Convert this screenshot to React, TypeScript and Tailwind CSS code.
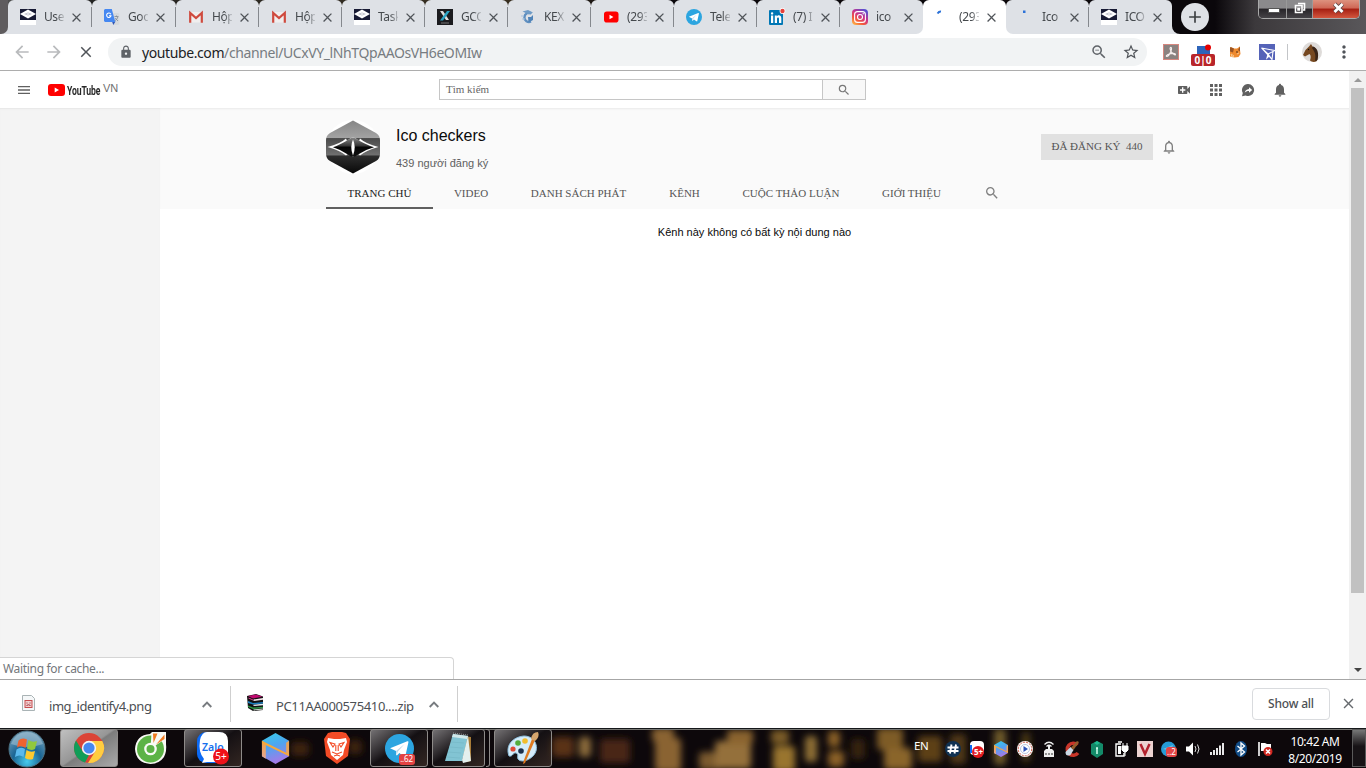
import React from "react";
import {
  MdMenu, MdVideoCall, MdApps, MdNotifications, MdNotificationsNone, MdSearch, MdLock,
  MdStarBorder, MdArrowBack, MdArrowForward, MdClose, MdAdd, MdMoreVert, MdZoomOut,
} from "react-icons/md";

const ui = "font-['Noto_Sans','Open_Sans',sans-serif]";
const serif = "font-['Liberation_Serif',serif]";
const sans = "font-['Liberation_Sans',sans-serif]";

function IcoIcon() {
  return (
    <svg width="16" height="16" viewBox="0 0 16 16">
      <rect width="16" height="16" fill="#fff" />
      <rect width="16" height="11" fill="#171a34" />
      <path d="M0 5 8 0.5 16 5 8 9.5Z" fill="#fff" />
      <path d="M4 5 8 3.4 12 5 8 6.6Z" fill="#b8bac6" />
      <path d="M6.2 5 8 4.2 9.8 5 8 5.8Z" fill="#fff" />
    </svg>
  );
}
function TranslateIcon() {
  return (
    <svg width="16" height="16" viewBox="0 0 16 16">
      <path d="M6 4h8.3l1 1v10l-1 1H9.5Z" fill="#d6d9dc" />
      <path d="M8 12.500h3.500l-2.200 3.500Z" fill="#3157b5" />
      <path d="M1 0h6.800l3.500 13H1L0 12V1Z" fill="#4688f1" />
      <path d="M6.800 5.200A2.200 2.200 0 1 0 7 6.700H5" fill="none" stroke="#fff" strokeWidth="1.100" />
      <path d="M10.500 7.500h4M12.500 6.500v1M13.800 8c-.5 2-1.700 3-3 3.600M11.200 9l2.800 3" stroke="#7c8790" strokeWidth=".8" fill="none" />
    </svg>
  );
}
function GmailIcon() {
  return (
    <svg width="16" height="16" viewBox="0 0 16 16">
      <path d="M2 3h12v10.500H2Z" fill="#f0eeee" />
      <path d="M2.200 13.800V4L8 9l5.800-5v9.800" fill="none" stroke="#cf4a3e" strokeWidth="2.200" />
    </svg>
  );
}
function GcoxIcon() {
  return (
    <svg width="16" height="16" viewBox="0 0 16 16">
      <rect width="16" height="16" fill="#1b1b1f" />
      <path d="M3 2h3l6 9h-3Z" fill="#ddd" />
      <path d="M10 2h3L6 11.500H3Z" fill="#2aa3c4" />
      <path d="M4 14h8" stroke="#777" />
    </svg>
  );
}
function KexIcon() {
  return (
    <svg width="16" height="16" viewBox="0 0 16 16">
      <path d="M11.500 4.500A4.600 4.600 0 1 0 11 12.500" fill="none" stroke="#5f8fc0" strokeWidth="2.400" />
      <path d="M2.500 2.500 8 1l5 2.500-4 2Z" fill="#6f9bc6" />
      <path d="M8 8h3l2-2v5l-3.500 2H8.500Z" fill="#4f83b8" />
      <path d="M1 7h3M2 10h3" stroke="#a9c4de" />
    </svg>
  );
}
function YtIcon() {
  return (
    <svg width="16" height="16" viewBox="0 0 16 16">
      <rect x="1" y="2.500" width="14.500" height="11" rx="2.800" fill="#f00" />
      <path d="M6.500 5.700v4.600L10.400 8Z" fill="#fff" />
    </svg>
  );
}
function TelegramIcon({ s = 16 }: { s?: number }) {
  return (
    <svg width={s} height={s} viewBox="0 0 16 16">
      <circle cx="8" cy="8" r="8" fill="#2ca5e0" />
      <path d="M2.800 7.800 12.300 4c.5-.1.700.2.600.700l-1.600 7.200c-.1.500-.5.600-.9.400L7.900 10.500 6.700 11.700c-.3.200-.6 0-.6-.4V9.400Z" fill="#fff" />
      <path d="M6.100 9.400 10.800 5.500 7.100 9.700 6.400 11.600Z" fill="#bcd6e8" />
    </svg>
  );
}
function LinkedinIcon() {
  return (
    <svg width="16" height="16" viewBox="0 0 16 16" className="overflow-visible">
      <rect y="1" width="14" height="15" rx="1" fill="#0077b5" />
      <path d="M2 6.500h2.200V14H2ZM3.100 3.200a1.200 1.200 0 1 1 0 2.400 1.200 1.200 0 0 1 0-2.400M5.800 6.500h2v1c1.100-1.800 4.500-1.700 4.500 1.700V14H10V9.900c0-2-2-1.700-2 0V14H5.800Z" fill="#fff" />
      <circle cx="13.500" cy="2" r="2.900" fill="#fff" />
      <circle cx="13.500" cy="2" r="2.200" fill="#e5403a" />
    </svg>
  );
}
function InstaIcon() {
  return (
    <svg width="16" height="16" viewBox="0 0 16 16">
      <defs>
        <linearGradient id="ig" x1="0" y1="1" x2=".7" y2="0">
          <stop offset="0" stopColor="#ffc94a" /><stop offset=".35" stopColor="#f4593a" />
          <stop offset=".65" stopColor="#c9308c" /><stop offset="1" stopColor="#5a50d0" />
        </linearGradient>
      </defs>
      <rect width="16" height="16" rx="4" fill="url(#ig)" />
      <rect x="2.600" y="2.600" width="10.800" height="10.800" rx="3" fill="none" stroke="#fff" strokeWidth="1.100" />
      <circle cx="8" cy="8" r="2.500" fill="none" stroke="#fff" strokeWidth="1.100" />
      <circle cx="11.200" cy="4.800" r=".7" fill="#fff" />
    </svg>
  );
}
function SpinA() {
  return <svg width="16" height="16" viewBox="0 0 16 16"><path d="M2.500 4.500Q4 2.300 6 2.500" stroke="#2c72d8" strokeWidth="2" fill="none" /></svg>;
}
function SpinB() {
  return <svg width="16" height="16" viewBox="0 0 16 16"><rect x="5" y="1.500" width="2.500" height="2.500" fill="#2c72d8" /></svg>;
}

const tabs: { t: string; icon: React.ReactNode; kind?: "active" | "before" | "after" | "nosep" }[] = [
  { t: "Use", icon: <IcoIcon /> },
  { t: "Goo", icon: <TranslateIcon /> },
  { t: "Hộp", icon: <GmailIcon /> },
  { t: "Hộp", icon: <GmailIcon /> },
  { t: "Task", icon: <IcoIcon /> },
  { t: "GCO", icon: <GcoxIcon /> },
  { t: "KEX", icon: <KexIcon /> },
  { t: "(293", icon: <YtIcon /> },
  { t: "Tele", icon: <TelegramIcon /> },
  { t: "(7) I", icon: <LinkedinIcon /> },
  { t: "ico", icon: <InstaIcon />, kind: "before" },
  { t: "(293", icon: <SpinA />, kind: "active" },
  { t: "Ico", icon: <SpinB />, kind: "after" },
  { t: "ICO", icon: <IcoIcon />, kind: "nosep" },
];

function TabStrip() {
  return (
    <div className="flex h-[34px] bg-[linear-gradient(90deg,#555_0,#222_80px,#3a3020_500px,#0a070b_650px,#0a070b_1215px,#3c393c_1255px,#59575a_1366px)]">
      <div className="w-2 shrink-0 bg-[#dee1e6]"><div className="h-full rounded-br-[7px] bg-[#5f5c5e]" /></div>
      {tabs.map((tab, i) => (
        <div key={i} className={(i < 2 ? "w-[84px] " : "w-[83px] ") + "shrink-0 " + (tab.kind === "before" || tab.kind === "after" ? "bg-[linear-gradient(#0b0709_50%,#fff_50%)]" : "")}>
          <div className={"flex h-full items-center rounded-t-[6px] pl-3 " + (tab.kind === "active" ? "bg-white" : tab.kind === "before" ? "rounded-br-[7px] bg-[#dee1e6]" : tab.kind === "after" ? "rounded-bl-[7px] bg-[#dee1e6]" : "bg-[#dee1e6]")}>
            <span className="block h-4 w-4 shrink-0">{tab.icon}</span>
            <span className={ui + " ml-2 w-5 shrink-0 overflow-hidden whitespace-nowrap text-[12px] leading-[18px] tracking-[-0.4px] text-[#45494d] [mask-image:linear-gradient(90deg,#000_60%,#0003)]"}>{tab.t}</span>
            <MdClose className="ml-[5px] h-[15px] w-[15px] shrink-0 text-[#505459]" />
            <span className={"ml-auto h-[20px] w-px " + (tab.kind && tab.kind !== "after" ? "" : "bg-[#85888d]")} />
          </div>
        </div>
      ))}
      <div className="w-[9px] shrink-0 self-end bg-[#dee1e6]"><div className="h-[34px] rounded-bl-[8px] bg-[#0a070b]" /></div>
      <div className="mt-[3px] flex h-7 w-7 shrink-0 items-center justify-center rounded-full bg-[#dee1e6]"><MdAdd className="h-[20px] w-[20px] text-[#3c4043]" /></div>
      <div className="ml-auto mr-[6px] flex h-[19px] w-[102px] overflow-hidden rounded-b-[5px] border border-t-0 border-[#aaa]">
        <div className="flex w-[28px] justify-center border-r border-[#999] bg-[linear-gradient(#8b8a8c_45%,#272428_50%,#454347)] pl-[3px]"><span className="mt-2 h-[5px] w-[12px] border border-[#555] bg-white" /></div>
        <div className="flex w-[26px] justify-center border-r border-[#999] bg-[linear-gradient(#8b8a8c_45%,#272428_50%,#454347)]">
          <svg width="14" height="14" viewBox="0 0 14 14" className="mt-[1px]"><path d="M5 2.500h6.500V9H10M2.500 4.500H9v7H2.500ZM5 7.500h1.500v1.500H5Z" fill="none" stroke="#fff" strokeWidth="1.600" /></svg>
        </div>
        <div className="flex flex-1 justify-center bg-[linear-gradient(#dd927f_0,#cf6755_45%,#a51f12_50%,#d3563e)] pl-1">
          <svg width="15" height="14" viewBox="0 0 15 14" className="mt-[1px]"><path d="m3.500 3 8 8m0-8-8 8" stroke="#5c4444" strokeWidth="4.500" /><path d="m3.500 3 8 8m0-8-8 8" stroke="#fff" strokeWidth="2.800" /></svg>
        </div>
      </div>
    </div>
  );
}

function Toolbar() {
  return (
    <div className="flex h-[37px] items-center border-b border-[#adadad] bg-white">
      <MdArrowBack className="ml-[12px] h-5 w-5 text-[#b9bbbd]" />
      <MdArrowForward className="ml-[12px] h-5 w-5 text-[#b9bbbd]" />
      <MdClose className="ml-[13px] h-[18px] w-[18px] text-[#505459]" />
      <div className="ml-[13px] flex h-7 w-[1039px] items-center rounded-full bg-[#f1f3f4] pl-[11px] pr-[7px]">
        <MdLock className="h-[14px] w-[14px] text-[#5f6368]" />
        <span className={ui + " ml-[9px] whitespace-nowrap text-[14px] tracking-[-0.4px] text-[#777c81]"}><span className="text-[#202124]">youtube.com</span>/channel/UCxVY_lNhTQpAAOsVH6eOMIw</span>
        <MdZoomOut className="ml-auto h-[18px] w-[18px] text-[#5f6368]" />
        <MdStarBorder className="ml-[14px] h-[18px] w-[18px] text-[#505459]" />
      </div>
      <svg className="ml-4" width="16" height="16" viewBox="0 0 16 16"><rect x=".5" y=".5" width="15" height="15" fill="#8a8280" stroke="#d6877f" /><path d="M7.500 3.500C8.500 3 9 4.500 8 7 6.800 10 5 12.500 3.800 12.500c-1.300 0-.3-1.700 2.400-2.500 3-.9 6.300-.8 6.300.4 0 1.300-3-.4-4.400-2.900C7 5.500 6.800 4 7.500 3.500Z" fill="none" stroke="#f7efee" strokeWidth="1.100" /></svg>
      <svg className="ml-3 mt-[2px]" width="24" height="27" viewBox="0 0 24 27"><rect x="6" y="6" width="13" height="8" fill="#2d64ba" /><circle cx="17" cy="7.500" r="3" fill="#e30000" /><rect y="14" width="24" height="12" rx="2" fill="#b9252a" /><text x="12" y="23.500" textAnchor="middle" fontFamily="Noto Sans" fontWeight="bold" fontSize="10" fill="#fff">0|0</text></svg>
      <svg className="ml-[12px]" width="16" height="16" viewBox="0 0 16 16"><path d="m4 3 3 1.500h3L13 2.500 13 6l.5 4-2 3-4 .5-4.500-1L3 8Z" fill="#ef8a2e" /><path d="m3 3 4 1.500-1 4-3-1ZM11 6l2-3.500v5Z" fill="#9b5524" /><path d="m4 10 3 2-2 1ZM10 10l2-1" stroke="#f9c78e" fill="none" /><circle cx="10" cy="8" r=".8" fill="#3a2415" /></svg>
      <svg className="ml-[16px]" width="16" height="16" viewBox="0 0 16 16"><rect width="16" height="16" fill="#5563b8" /><path d="M2.500 4 16 6.500M2.500 4 13 15.500M2.500 4 9 10l7-3.500M9 10l-1 4 2.500-2.500M9 10l4 5.500 1-8" fill="none" stroke="#fff" strokeWidth="1.100" /></svg>
      <span className="ml-[12px] h-4 w-px bg-[#c3c5c8]" />
      <svg className="ml-[14px]" width="20" height="20" viewBox="0 0 20 20"><circle cx="10" cy="10" r="10" fill="#dedbd9" /><path d="M9 2l1.500 2.500C15 6 16 11 15 19q-4 2-7-.5c1-3 1-5-.5-6.500L3 14.500 1 13l2.500-5L7 4.500Z" fill="#764820" /><path d="M11 4.500C16 6 17 12 15.500 18L13 19c1-6 0-9-3-13Z" fill="#3a2518" /><circle cx="6.500" cy="7.500" r=".7" fill="#111" /></svg>
      <MdMoreVert className="ml-[12px] h-5 w-5 text-[#505459]" />
    </div>
  );
}

function Masthead() {
  return (
    <div className="flex h-[37px] items-center bg-white">
      <MdMenu className="ml-4 h-4 w-4 text-[#606060]" />
      <svg className="ml-4" width="17" height="12" viewBox="0 0 17 12"><rect width="17" height="12" rx="3" fill="#f00" /><path d="M6.700 3.500v5L11 6Z" fill="#fff" /></svg>
      <span className="ml-[2px] w-[34px] whitespace-nowrap"><span className="block w-[60px] origin-left scale-x-[0.64] font-['Roboto',sans-serif] text-[13.5px] font-bold leading-[20px] tracking-[-0.2px] text-[#282828]">YouTube</span></span>
      <span className={sans + " ml-[2px] -mt-[3px] w-4 text-[11px] text-[#707070]"}>VN</span>
      <div className="ml-80 flex h-[21px] w-[427px] border border-[#c6c6c6]">
        <div className={serif + " flex w-[383px] items-center border-r border-[#c6c6c6] pl-[6px] text-[11px] leading-none text-[#666]"}>Tìm kiếm</div>
        <div className="flex flex-1 items-center justify-center bg-[#f8f8f8]"><MdSearch className="h-[14px] w-[14px] text-[#777]" /></div>
      </div>
      <MdVideoCall className="ml-[310px] h-4 w-4 text-[#606060]" />
      <MdApps className="ml-[15px] h-[18px] w-[18px] text-[#606060]" />
      <svg className="ml-4" width="14" height="14" viewBox="0 0 14 14"><path d="M7 1a6 6 0 1 1-2.300 11.500L1 13.200l.8-3.200A6 6 0 0 1 7 1Z" fill="#606060" /><path d="M8 4.200 11.200 7 8 9.800V8C6 8 4.700 8.600 3.700 9.800 4 7.700 5.400 6.200 8 5.900Z" fill="#fff" /></svg>
      <MdNotifications className="ml-[17px] h-4 w-4 text-[#606060]" />
    </div>
  );
}

const channelTabs = [
  ["TRANG CHỦ", "w-[107px]"], ["VIDEO", "w-[76px]"], ["DANH SÁCH PHÁT", "w-[139px]"],
  ["KÊNH", "w-[73px]"], ["CUỘC THẢO LUẬN", "w-[140px]"], ["GIỚI THIỆU", "w-[101px]"],
];

function Page() {
  return (
    <div className="relative flex h-[608px] bg-white">
      <div className="flex w-[1349px] flex-col">
        <Masthead />
        <div className="flex flex-1">
          <div className="w-40 bg-[#f4f4f4] shadow-[inset_0_2px_2px_-1px_#e6e6e6]" />
          <div className="flex flex-1 flex-col">
            <div className="h-[101px] bg-[#fafafa] pl-[166px] shadow-[inset_0_2px_2px_-1px_#e9e9e9]">
              <div className="flex h-[70px] pt-3">
                <svg width="54" height="54" viewBox="0 0 54 54">
                  <defs>
                    <linearGradient id="hx" x1="0" y1="0" x2="0" y2="1">
                      <stop offset="0" stopColor="#858585" /><stop offset=".33" stopColor="#a3a3a3" /><stop offset=".34" stopColor="#4b4b4b" />
                      <stop offset=".65" stopColor="#707070" /><stop offset=".67" stopColor="#2d2d2d" /><stop offset="1" stopColor="#080808" />
                    </linearGradient>
                    <linearGradient id="st" x1="0" y1="0" x2="0" y2="1">
                      <stop offset="0" stopColor="#888" /><stop offset=".45" stopColor="#333" /><stop offset=".5" stopColor="#050505" /><stop offset="1" stopColor="#111" />
                    </linearGradient>
                  </defs>
                  <circle cx="27" cy="27" r="27" fill="#fff" />
                  <path d="M27 .5 50 13Q54 15.500 54 20V34Q54 38.500 50 41L27 53.500 4 41Q0 38.500 0 34V20Q0 15.500 4 13Z" fill="url(#hx)" />
                  <path d="M1.500 27Q14 24 20 18.500L21 21Q24 18 27 17 30 18 33 21L34 18.500Q40 24 52.500 27 40 30.500 34 35.500L30 32 27 37 24 32 20 35.500Q14 30.500 1.500 27Z" fill="#fff" />
                  <path d="M7 27.300Q15 24.500 26 17.500H28Q39 24.500 48 27.300 40 29.500 33 34L29 36.500H25L21 34Q14 29.500 7 27.300Z" fill="url(#st)" />
                  <path d="M27 19.500Q30.500 27 27 35.500 23.500 27 27 19.500Z" fill="#fff" />
                </svg>
                <div className={sans + " ml-4 w-[645px] pt-[6px]"}>
                  <div className="text-[16px] leading-5 text-[#0a0a0a]">Ico checkers</div>
                  <div className="mt-[9px] text-[11px] leading-4 text-[#606060]">439 người đăng ký</div>
                </div>
                <div className={serif + " mt-[14px] flex h-[26px] w-28 items-center justify-center whitespace-pre bg-[#e1e1e1] pb-px text-[11px] text-[#555]"}>ĐÃ ĐĂNG KÝ  440</div>
                <MdNotificationsNone className="ml-[8px] mt-[19px] h-4 w-4 text-[#808080]" />
              </div>
              <div className="flex h-[31px] items-start">
                {channelTabs.map(([t, w], i) => (
                  <div key={t} className={serif + " " + w + " flex h-[31px] items-center justify-center whitespace-nowrap pt-[1px] text-[11px] " + (i === 0 ? "border-b-2 border-[#606060] text-[#222]" : "pb-[2px] text-[#555]")}>{t}</div>
                ))}
                <MdSearch className="ml-[22px] mt-[7px] h-4 w-4 text-[#808080]" />
              </div>
            </div>
            <div className={sans + " pt-[15px] text-center text-[11px] leading-4 text-[#0a0a0a]"}>Kênh này không có bất kỳ nội dung nào</div>
          </div>
        </div>
      </div>
      <div className="flex w-[17px] flex-col items-center bg-[#f1f1f1]">
        <div className="flex h-[17px] items-center"><svg width="8" height="4" viewBox="0 0 8 4"><path d="M0 4 4 0l4 4Z" fill="#999" /></svg></div>
        <div className="h-[505px] w-[13px] bg-[#c1c1c1]" />
        <div className="mt-auto flex h-[18px] items-center"><svg width="8" height="4" viewBox="0 0 8 4"><path d="m0 0 4 4 4-4Z" fill="#444" /></svg></div>
      </div>
      <div className={ui + " absolute bottom-0 left-0 h-[22px] w-[454px] rounded-tr border border-b-0 border-l-0 border-[#d5d5d5] bg-white pl-[3px] text-[12px] leading-[22px] tracking-[-0.32px] text-[#72767a]"}>Waiting for cache...</div>
    </div>
  );
}

function Chevron() {
  return <svg width="10" height="7" viewBox="0 0 10 7"><path d="m.7 6 4.300-4.300L9.300 6" fill="none" stroke="#777b7f" strokeWidth="1.900" /></svg>;
}

function Downloads() {
  return (
    <div className={ui + " flex h-[49px] items-center border-t border-[#a6a6a6] bg-white text-[13px] text-[#4c5054]"}>
      <div className="flex h-9 w-[231px] items-center border-r border-[#cfcfcf]">
        <svg className="-mt-[2px] ml-[22px]" width="13" height="16" viewBox="0 0 13 16"><path d="M.5.500h9l3 3v12H.5Z" fill="#f5f7f8" stroke="#a9b3b5" /><rect x="2.500" y="5" width="8" height="8" fill="#c74d4f" /><rect x="3.500" y="6" width="6" height="6" fill="#f1d0d0" /><path d="M4.500 8h1m2 0h1M4.500 10.500q2-1.500 4 0" stroke="#a02a35" fill="none" /></svg>
        <span className="ml-[14px] mt-[5px] w-[153px] tracking-[-0.45px]">img_identify4.png</span><Chevron />
      </div>
      <div className="flex h-9 w-[227px] items-center border-r border-[#cfcfcf]">
        <svg className="-mt-1 ml-4" width="17" height="17" viewBox="0 0 17 17">
          <path d="M0 2 9 0l7 2.500V16L6 17 1 14Z" fill="#111" />
          <path d="m1 2 8-1.500 6.500 2.300L6 4.500Z" fill="#c00a70" />
          <path d="M1.500 3.500 6 5.500v1L1.500 4.500Z" fill="#e0408f" />
          <path d="M6.500 5.500 16 4v1.800L6.500 7Z" fill="#f3e6ea" />
          <path d="m1 7 5 2 10-1v1.500L6 10.500 1 9Z" fill="#1b7fc0" />
          <path d="M6.500 10.800 16 9.800v1.400L6.500 12Z" fill="#e6eef2" />
          <path d="m1 11.500 5 2 10-.8v1.300L6 15l-5-2Z" fill="#2c9a44" />
          <path d="M6.500 15.500 16 14.600v.9l-9.500.9Z" fill="#e3efe4" />
        </svg>
        <span className="ml-[12px] mt-[5px] w-[153px] whitespace-nowrap tracking-[-0.37px]">PC11AA000575410....zip</span><Chevron />
      </div>
      <div className="ml-auto mr-[10px] flex h-8 w-[78px] items-center justify-center rounded border border-[#d9dbde] text-[12px] font-medium leading-4 tracking-[-0.2px]"><span className="-mt-px">Show all</span></div>
      <MdClose className="mr-[9px] -mt-px h-[17px] w-[17px] text-[#666a6e]" />
    </div>
  );
}

const lumps: [number, number, number, number, string][] = [
  [300, 20, 18, 14, "#3c240e"], [355, 18, 14, 14, "#3c240e"], [563, 18, 22, 20, "#5a3016"], [585, 18, 12, 20, "#8b6a3a"],
  [615, 22, 30, 24, "#4a2717"], [668, 26, 26, 34, "#8a6330"], [663, 6, 22, 14, "#8a6330"], [710, 32, 22, 18, "#7a5a2e"], [733, 26, 36, 28, "#94703a"], [740, 8, 26, 14, "#8a632e"],
  [784, 30, 22, 26, "#99752e"], [780, 8, 18, 14, "#7a5c26"], [811, 20, 12, 26, "#8e7036"], [834, 10, 12, 16, "#8a6026"], [836, 30, 16, 16, "#8a6026"], [858, 20, 14, 20, "#34200f"],
  [890, 10, 26, 22, "#7e5c28"], [898, 30, 28, 22, "#8a652c"], [930, 20, 24, 26, "#5d4017"], [958, 20, 16, 30, "#4f3912"], [1000, 18, 12, 36, "#6e5a2a"], [1026, 18, 8, 30, "#4d3a16"],
];

function Slot({ w, on, lit, children }: { w: string; on?: boolean; lit?: boolean; children: React.ReactNode }) {
  return (
    <div className={w + " flex h-[38px] shrink-0 items-center justify-center " + (on ? "rounded-[3px] border border-[#8e8b89] " + (lit ? "bg-[linear-gradient(145deg,#c0c0c0,#969696_48%,#7c7c7c_51%,#aaa)]" : "bg-[linear-gradient(145deg,#8d8b8dcc,#3e3b3e99_38%,#1a171a88_48%,#54413688)]") : "")}>{children}</div>
  );
}

function Brush() {
  return (
    <svg width="32" height="34" viewBox="0 0 32 34">
      <path d="M2 25C-2 14 6 6 17 5c12 0 16 13 9 20-6 6-13 6-15 3-1-3 1-5-2-6s-3 4-7 3Z" fill="#d5ecfa" stroke="#8ebfdc" />
      <circle cx="6" cy="18" r="2.600" fill="#e04b38" /><circle cx="11" cy="12" r="2.800" fill="#55ad3d" /><circle cx="18" cy="10" r="2.800" fill="#f3bd2e" /><circle cx="14" cy="20" r="2.800" fill="#1c304c" />
      <path d="m25 8 3 1-10 23-2 1 1-4Z" fill="#df7b22" /><path d="M24 8Q25 1 31 1q2 5-3 9Z" fill="#d5a56d" />
    </svg>
  );
}

function Cube({ s }: { s: number }) {
  return (
    <svg width={s} height={s} viewBox="0 0 30 32">
      <defs>
        <linearGradient id="cb" x1="0" y1="0" x2=".3" y2="1"><stop offset="0" stopColor="#35cde8" /><stop offset=".5" stopColor="#4fa4f0" /><stop offset="1" stopColor="#a07be8" /></linearGradient>
        <linearGradient id="co" x1="0" y1="0" x2="0" y2="1"><stop offset="0" stopColor="#f6a23c" /><stop offset="1" stopColor="#e0a79a" /></linearGradient>
      </defs>
      <path d="M15 0 29 8 29 24 15 32 1 24V8Z" fill="url(#cb)" />
      <path d="M1 8 5 10.500V26.500L1 24Z" fill="url(#co)" />
      <path d="M29 8 26 10V21L29 24Z" fill="#e9a45a" />
      <path d="M1 8 29 22V24L1 10.500Z" fill="#f7a93b" />
    </svg>
  );
}

function Zalo() {
  return (
    <svg width="32" height="34" viewBox="0 0 32 34">
      <rect x="0" y="1" width="30" height="31" rx="9" fill="#0b69f4" /><path d="M10 1h12q9 0 9 9v13q0 8-9 8H10l-5 1 2-4Q1 21 3 9 5 1 10 1Z" fill="#fff" />
      <text x="5" y="20" fontFamily="Noto Sans" fontWeight="600" fontSize="10.500" fill="#1670ed">Zalo</text>
      <circle cx="24" cy="25.500" r="8" fill="#ee1119" /><text x="24" y="29" textAnchor="middle" fontFamily="Noto Sans" fontSize="10" fill="#fff">5+</text>
    </svg>
  );
}

function Tray() {
  const c = "h-[18px] w-[18px] shrink-0";
  return (
    <div className="flex w-[336px] items-center gap-[6px]">
      <svg className={c} viewBox="0 0 18 18"><circle cx="9" cy="9" r="8" fill="#103252" /><path d="M7.500 4.500 6 13.500M12 4.500l-1.500 9M3.500 7.500h11M3.500 11h11" stroke="#fff" strokeWidth="1.900" /></svg>
      <svg className={c} viewBox="0 0 18 18"><rect x="2" y="1" width="14" height="14" rx="4" fill="#fff" /><path d="M2 5h2v8H2Z" fill="#0b69f4" /><circle cx="10" cy="12" r="6" fill="#e1191f" /><text x="10.500" y="15" textAnchor="middle" fontFamily="Noto Sans" fontSize="8" fontWeight="bold" fill="#fff">5+</text></svg>
      <span className="flex w-[18px] shrink-0 justify-center"><Cube s={16} /></span>
      <svg className={c} viewBox="0 0 18 18"><circle cx="9" cy="9" r="8" fill="#fff" /><circle cx="9" cy="9" r="6.800" fill="none" stroke="#cc5544" strokeDasharray="2 1" /><circle cx="9" cy="9" r="4.500" fill="none" stroke="#bcc4dc" /><path d="M7.500 6v6l4.500-3Z" fill="#2e52b8" /></svg>
      <svg className={c} viewBox="0 0 18 18"><path d="M4.500 4.500Q9 0 13.500 4.500M6.500 6.500Q9 4 11.500 6.500" stroke="#eee" strokeWidth="1.300" fill="none" /><path d="M8 6h2v3h2l2 2v6H4v-6l2-2h2Z" fill="#eee" /><path d="M6 13v2m3-2v2m3-2v2" stroke="#333" /></svg>
      <svg className={c} viewBox="0 0 18 18"><path d="M13.500 5A6 6 0 1 0 14 13" fill="none" stroke="#c7352a" strokeWidth="3.600" /><path d="m1.500 12 5-5 3 3-3 5q-5 2-5-3Z" fill="#cbd8e5" /><path d="m7 7.500 6-6.500 2 1-5.500 8Z" fill="#925e2d" /></svg>
      <svg className={c} viewBox="0 0 18 18"><path d="m9 1 6 3v10l-6 4-6-4V4Z" fill="#138a69" /><path d="m9 1 3 2-3 2-3-2Z" fill="#1fb98f" /><path d="M9 8v6M8 8h2" stroke="#d0fff0" strokeWidth="1.500" fill="none" /></svg>
      <svg className={c} viewBox="0 0 18 18"><path d="M9 4H4v12h8v-3M6 2h4" stroke="#fff" strokeWidth="1.400" fill="none" /><path d="M6 6v8h3V6Z" fill="#fff" /><path d="M10 6h6v4l-2 2h-2l-2-2ZM11 3v3M15 3v3M13 12v4" fill="#fff" stroke="#fff" /></svg>
      <svg className={c} viewBox="0 0 18 18"><rect x="1" y="1" width="16" height="16" fill="#ecd2d0" /><path d="m4.500 4 4.500 10L13.500 4" fill="none" stroke="#b2212d" strokeWidth="2.500" /></svg>
      <svg className={c} viewBox="0 0 18 18"><circle cx="8.500" cy="9" r="7.500" fill="#259bd5" /><path d="m3 9 10-4-2 6Z" fill="#6cbce5" /><rect x="6" y="7" width="11" height="10" rx="3" fill="#e24446" /><text x="11.500" y="15" textAnchor="middle" fontFamily="Noto Sans" fontSize="8" fill="#fff">..2</text></svg>
      <svg className={c} viewBox="0 0 18 18"><path d="M2 6.500h3l4-4v13l-4-4H2Z" fill="#fff" /><path d="M11 6q2 3 0 6M13.500 4.500q3 4.500 0 9" fill="none" stroke="#ddd" /></svg>
      <svg className={c} viewBox="0 0 18 18"><path d="M3 12v3M6 10v5M9 8v7M12 5.500v9.500M15 3v12" stroke="#fff" strokeWidth="1.800" /></svg>
      <svg className={c} viewBox="0 0 18 18"><ellipse cx="9" cy="9" rx="6" ry="8" fill="#114c86" /><path d="m5.500 6 7 6L9 15V3l3.500 3-7 6" fill="none" stroke="#fff" strokeWidth="1.300" /></svg>
      <svg className={c} viewBox="0 0 18 18"><path d="M3 2v14" stroke="#fff" strokeWidth="1.600" /><path d="M5 3h4l2 1h4v7H5Z" fill="#fff" /><circle cx="12" cy="11.500" r="4.500" fill="#d12720" /><path d="m10 9.500 4 4m0-4-4 4" stroke="#fff" strokeWidth="1.600" /></svg>
    </div>
  );
}

function Taskbar() {
  return (
    <div className={ui + " relative isolate flex h-10 border-t border-[#15181a] bg-[#0d080b]"}>
      <svg className="absolute inset-0 -z-10" width="1366" height="39" viewBox="0 0 1366 39">
        <defs><filter id="soft" filterUnits="userSpaceOnUse" x="0" y="-20" width="1366" height="80"><feGaussianBlur stdDeviation="3.500" /></filter></defs>
        <g filter="url(#soft)">
          {lumps.map(([x, y, w, h, f], i) => <rect key={i} x={x - w / 2} y={y - h / 2} width={w} height={h} rx="4" fill={f} />)}
        </g>
        <path d="M0 .5H1366" stroke="#777773" />
      </svg>
      <div className="flex w-[60px] items-center justify-center pr-[6px]">
        <svg width="38" height="38" viewBox="0 0 38 38">
          <defs><radialGradient id="orb" cx=".5" cy=".85" r=".8"><stop offset="0" stopColor="#47cbee" /><stop offset=".5" stopColor="#1a6594" /><stop offset="1" stopColor="#6e9cb9" /></radialGradient></defs>
          <circle cx="19" cy="19" r="18" fill="url(#orb)" stroke="#4c7182" /><path d="M3 14Q8 2 19 2t16 12Q19 20 3 14Z" fill="#a6c3d4" opacity=".55" />
          <path d="M10.500 10.500Q14 7 19 9.500L17.500 18q-4-3-8.500-.5Z" fill="#ef6330" /><path d="M20.500 10q4 3 8.500 1L27 19q-4 2-8-.5Z" fill="#91c83e" /><path d="M8.500 19.500q4-3 8.500-.5L15.500 27q-4-3-8.500 0Z" fill="#5bb9ed" /><path d="M18.500 20q4 3 8.500 1L25 29q-4 1.500-8-1Z" fill="#fdca2f" />
        </svg>
      </div>
      <Slot w="w-[58px]" on lit>
        <svg width="32" height="32" viewBox="0 0 32 32"><circle cx="16" cy="16" r="15" fill="#db4437" /><path d="M3 8.500 10 20l6 3-4 7.500A15 15 0 0 1 3 8.500Z" fill="#109d58" /><path d="M16 9h13.300A15 15 0 0 1 15 31l7.500-12Z" fill="#ffcd40" /><circle cx="16" cy="16" r="7.200" fill="#f4f4f4" /><circle cx="16" cy="16" r="5.600" fill="#4688f1" /></svg>
      </Slot>
      <Slot w="w-[66px]">
        <svg width="32" height="34" viewBox="0 0 32 34">
          <path d="M15 3 17 1H31V13Q32 20 29 26 24 33 15.500 33 1 32 0 18 1 4 15 3Z" fill="#f8faf5" />
          <circle cx="15.500" cy="18" r="13.500" fill="#5cb346" />
          <path d="M15.500 18 16.500 2H30V8Z" fill="#f8faf5" />
          <path d="M18 2.500h4.500L18.500 12ZM29.500 3.500V8L21 13.500Z" fill="#f07c22" />
          <circle cx="15.500" cy="18" r="6.300" fill="#f8faf5" /><circle cx="15.500" cy="18" r="4" fill="#5cb346" />
        </svg>
      </Slot>
      <Slot w="w-[58px]" on><Zalo /></Slot>
      <Slot w="w-[66px]"><Cube s={31} /></Slot>
      <Slot w="w-[58px]">
        <svg width="28" height="32" viewBox="0 0 28 32"><path d="m5 1 4-1h10l4 1 4 6-2 17-11 8L3 24 1 7Z" fill="#f34b26" /><path d="m5 6 6 1h6l6-1 1 4-3 8-1 5-6 5-6-5-1-5-3-8Z" fill="#fff" /><path d="m7 10.500 5 1.500-2 3ZM21 10.500l-5 1.500 2 3ZM12.800 13v6M15.200 13v6M9 20l5 2 5-2M11 24l3-1 3 1" fill="none" stroke="#f34b26" strokeWidth="1.100" /></svg>
      </Slot>
      <div className="ml-1">
        <Slot w="w-[58px]" on>
          <span className="relative"><TelegramIcon s={29} /><span className="absolute -bottom-[2px] left-[14px] flex h-[11px] w-4 items-center justify-center rounded-[3px] bg-[#e34343] text-[8px] tracking-[-0.2px] text-white">..62</span></span>
        </Slot>
      </div>
      <div className="ml-1 flex">
        <Slot w="w-[53px]" on>
          <svg width="30" height="32" viewBox="0 0 30 32"><path d="m9 3 18 2v24l-4 1Z" fill="#a87c38" /><path d="M9 2 24 4 18 29H1Z" fill="#82c4d3" /><path d="m24 4 3 25-8 2-1-3Z" fill="#e5f0ee" /><path d="M9 2 24 4l-1 3L8 5Z" fill="#d2e8e9" /><path d="m7 10 13 1M5 15l14 1M4 20l13 1M2 25l14 1" stroke="#74b5c4" strokeWidth=".6" /><path d="m9 1 15 2" stroke="#999" strokeDasharray="1 1" /></svg>
        </Slot>
        <div className="ml-px h-[38px] w-1 rounded-r-[3px] border border-l-0 border-[#8e8b89]" />
      </div>
      <div className="ml-1"><Slot w="w-[58px]" on><Brush /></Slot></div>
      <div className="ml-auto flex">
        <span className="w-[30px] pt-[8px] text-[11.500px] leading-[18px] tracking-[-0.3px] text-white">EN</span>
        <Tray />
        <div className="ml-[1px] w-[68px] pt-[4px] text-center text-[12px] leading-[17px] tracking-[-0.4px] text-white">10:42 AM<br />8/20/2019</div>
        <div className="ml-[3px] h-[38px] w-[14px] border border-[#5a5a5a] bg-[linear-gradient(#777,#171316_45%)]" />
      </div>
    </div>
  );
}

export default function App() {
  return (
    <div className="h-[768px] w-[1366px] overflow-hidden bg-white">
      <TabStrip />
      <Toolbar />
      <Page />
      <Downloads />
      <Taskbar />
    </div>
  );
}
